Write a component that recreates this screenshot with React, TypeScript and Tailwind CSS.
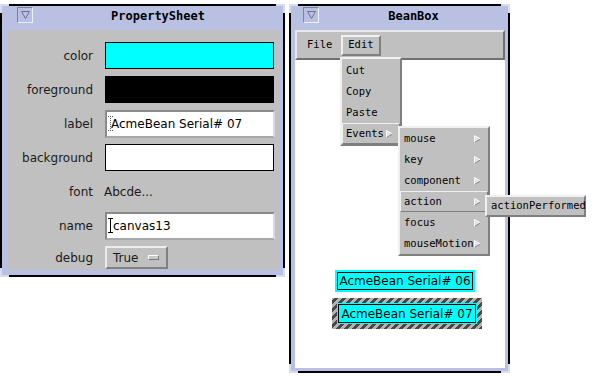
import React from "react";

const sans = "font-['DejaVu_Sans',sans-serif]";
const mono = "font-['DejaVu_Sans_Mono',monospace]";

function WinButton() {
  return (
    <div className="flex h-[16px] w-[16px] shrink-0 items-center justify-center border border-b-[#eef0fa] border-l-[#7a82a6] border-r-[#eef0fa] border-t-[#7a82a6]">
      <svg width="9" height="8" viewBox="0 0 9 8">
        <polygon points="0.5,0.5 8.5,0.5 4.5,7.5" fill="none" stroke="#6b7292" strokeWidth="1" />
      </svg>
    </div>
  );
}

function Corners() {
  return (
    <>
      <div className="absolute left-[-2px] top-[-2px] h-[9px] w-[9px] border-l-2 border-t-2 border-[#d6dbf1]" />
      <div className="absolute right-[-2px] top-[-2px] h-[9px] w-[9px] border-r-2 border-t-2 border-[#d6dbf1]" />
      <div className="absolute bottom-[-2px] left-[-2px] h-[9px] w-[9px] border-b-2 border-l-2 border-[#d6dbf1]" />
      <div className="absolute bottom-[-2px] right-[-2px] h-[9px] w-[9px] border-b-2 border-r-2 border-[#d6dbf1]" />
    </>
  );
}

function Window({
  title,
  className,
  btnLeft,
  children,
}: {
  title: string;
  className: string;
  btnLeft: string;
  children: React.ReactNode;
}) {
  return (
    <div className={`absolute flex flex-col border-2 border-black bg-[#b9c0e2] ${className}`}>
      <Corners />
      <div className="flex h-[24px] shrink-0 items-start pt-[1px]">
        <div className={btnLeft}>
          <WinButton />
        </div>
        <div className={`flex-1 pt-[1px] text-center text-[12px] font-bold leading-[16px] text-black ${mono}`}>
          {title}
        </div>
      </div>
      {children}
    </div>
  );
}

function Arrow() {
  return (
    <svg width="7" height="8" viewBox="0 0 7 8" className="shrink-0">
      <polygon points="0.5,0.5 6.5,4 0.5,7.5" fill="#e2e2e2" />
      <polyline points="0.5,7.5 6.5,4" fill="none" stroke="#858585" strokeWidth="1" />
      <polyline points="0.5,7.5 0.5,0.5 6.5,4" fill="none" stroke="#fafafa" strokeWidth="1" />
    </svg>
  );
}

function IBeam({ dotted }: { dotted?: boolean }) {
  return (
    <svg width="5" height="15" viewBox="0 0 5 15" className="-mr-[2px] shrink-0">
      <g stroke={dotted ? "#555" : "#000"} strokeWidth="1" strokeDasharray={dotted ? "1 1" : undefined}>
        <line x1="0" y1="0.5" x2="5" y2="0.5" />
        <line x1="2.5" y1="0" x2="2.5" y2="15" />
        <line x1="0" y1="14.5" x2="5" y2="14.5" />
      </g>
    </svg>
  );
}

function Row({ label, children, h = "h-[27px]" }: { label: string; children: React.ReactNode; h?: string }) {
  return (
    <div className={`flex ${h} items-center gap-[12px]`}>
      <div className="w-[85px] shrink-0 text-right">{label}</div>
      {children}
    </div>
  );
}

function Field({ text, dotted }: { text: string; dotted?: boolean }) {
  return (
    <div className="flex h-[28px] w-[170px] items-center border-2 border-b-[#a8a8a8] border-l-[#8a8a8a] border-r-[#d8d8d8] border-t-[#8a8a8a] bg-white pl-[1px]">
      <IBeam dotted={dotted} />
      <span className={`text-black ${dotted ? "" : "pl-[2px]"}`}>{text}</span>
    </div>
  );
}

function PropertySheet() {
  return (
    <Window title="PropertySheet" className="left-0 top-[4px] h-[273px] w-[285px]" btnLeft="pl-[15px]">
      <div className="flex flex-1 flex-col pb-[5px] pl-[6px] pr-[3px]">
        <div className={`flex h-[240px] flex-col gap-[7px] bg-[#c0c0c0] pt-[12px] text-[12px] leading-none text-[#1a1a1a] ${sans}`}>
          <Row label="color">
            <div className="h-[27px] w-[169px] border border-black bg-[#00ffff]" />
          </Row>
          <Row label="foreground">
            <div className="h-[27px] w-[169px] border border-black bg-black" />
          </Row>
          <Row label="label">
            <Field text="AcmeBean Serial# 07" dotted />
          </Row>
          <Row label="background">
            <div className="h-[27px] w-[169px] border border-black bg-white" />
          </Row>
          <Row label="font">
            <span className="-ml-[1px]">Abcde...</span>
          </Row>
          <Row label="name">
            <Field text="canvas13" />
          </Row>
          <Row label="debug" h="h-[23px]">
            <div className="flex h-[23px] w-[63px] items-center gap-[9px] border-2 border-b-[#808080] border-l-[#ececec] border-r-[#808080] border-t-[#ececec] pl-[6px]">
              <span>True</span>
              <div className="h-[5px] w-[11px] border border-b-[#7a7a7a] border-l-white border-r-[#7a7a7a] border-t-white bg-[#c8c8c8]" />
            </div>
          </Row>
        </div>
      </div>
    </Window>
  );
}

const raised = "border-b-[#7f7f7f] border-l-[#f0f0f0] border-r-[#7f7f7f] border-t-[#f0f0f0]";

function MenuItem({
  label,
  arrow,
  active,
  w,
}: {
  label: string;
  arrow?: boolean;
  active?: boolean;
  w: string;
}) {
  return (
    <div
      className={`flex h-[21px] items-center justify-between pl-[3px] pr-[6px] ${w} ${
        active ? `border ${raised}` : "border border-transparent"
      }`}
    >
      <span>{label}</span>
      {arrow && <Arrow />}
    </div>
  );
}

function BeanBox() {
  return (
    <Window title="BeanBox" className="left-[289px] top-[4px] h-[369px] w-[221px]" btnLeft="pl-[12px]">
      <div className="flex flex-1 flex-col pb-[3px] pl-[4px] pr-[3px]">
        <div
          className={`flex h-[30px] shrink-0 items-center gap-[9px] border-2 border-b-[#707070] border-l-[#e8e8e8] border-r-[#707070] border-t-[#e8e8e8] bg-[#c0c0c0] pl-[10px] text-[10.5px] text-black ${mono}`}
        >
          <span>File</span>
          <div className={`flex h-[21px] items-center border-2 px-[5px] ${raised}`}>Edit</div>
        </div>
        <div className="flex-1 bg-white" />
      </div>
    </Window>
  );
}

function Beans() {
  return (
    <div className={`text-[12px] text-black ${sans}`}>
      <div className="absolute left-[335px] top-[270px] h-[22px] w-[140px] bg-[#00ffff] p-[2px]">
        <div className="flex h-full items-center justify-center border border-black">AcmeBean Serial# 06</div>
      </div>
      <div className="absolute left-[332px] top-[298px] h-[31px] w-[150px] bg-[repeating-linear-gradient(-45deg,#474747_0px,#474747_2.8px,#b4b4b4_2.8px,#b4b4b4_5.6px)] p-[5px]">
        <div className="h-full bg-[#00ffff] p-[1px]">
          <div className="flex h-full items-center justify-center border border-black">AcmeBean Serial# 07</div>
        </div>
      </div>
    </div>
  );
}

function Menus() {
  return (
    <div className={`text-[10.5px] text-black ${mono}`}>
      <div className={`absolute left-[340px] top-[57px] flex flex-col border-2 bg-[#c0c0c0] pt-[1px] ${raised}`}>
        <MenuItem label="Cut" w="w-[58px]" />
        <MenuItem label="Copy" w="w-[58px]" />
        <MenuItem label="Paste" w="w-[58px]" />
        <MenuItem label="Events" arrow active w="w-[58px]" />
      </div>
      <div className={`absolute left-[398px] top-[126px] flex flex-col border-2 bg-[#c0c0c0] ${raised}`}>
        <MenuItem label="mouse" arrow w="w-[88px]" />
        <MenuItem label="key" arrow w="w-[88px]" />
        <MenuItem label="component" arrow w="w-[88px]" />
        <MenuItem label="action" arrow active w="w-[88px]" />
        <MenuItem label="focus" arrow w="w-[88px]" />
        <MenuItem label="mouseMotion" arrow w="w-[88px]" />
      </div>
      <div className={`absolute left-[485px] top-[195px] flex h-[22px] w-[101px] items-center border-2 bg-[#c0c0c0] pl-[4px] ${raised}`}>
        actionPerformed
      </div>
    </div>
  );
}

export default function App() {
  return (
    <div className="relative h-[378px] w-[593px] overflow-hidden bg-white">
      <PropertySheet />
      <BeanBox />
      <Beans />
      <Menus />
    </div>
  );
}
